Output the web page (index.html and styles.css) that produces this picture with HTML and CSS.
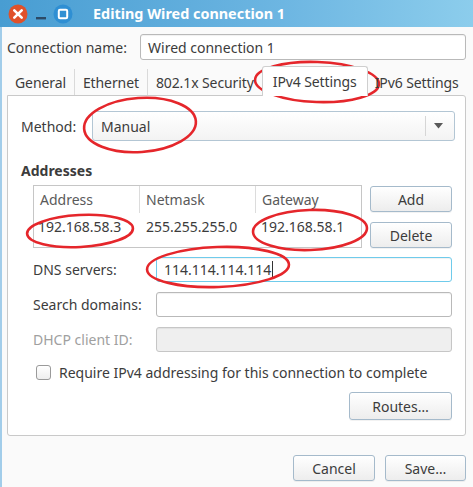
FILE: index.html
```html
<!DOCTYPE html>
<html>
<head>
<meta charset="utf-8">
<link rel="stylesheet" href="styles.css">
</head>
<body>
<div class="titlebar">
  <div class="wm">
    <svg class="wm-btn" width="20" height="20" viewBox="0 0 20 20">
      <circle cx="10" cy="10" r="9.5" fill="#e0512a"/>
      <path d="M6.3 6.3 L13.7 13.7 M13.7 6.3 L6.3 13.7" stroke="#fff" stroke-width="2.6" stroke-linecap="round"/>
    </svg>
    <svg class="wm-min" width="12" height="20" viewBox="0 0 12 20">
      <rect x="1" y="13" width="10" height="2.4" fill="#2c4a66"/>
    </svg>
    <svg class="wm-btn" width="20" height="20" viewBox="0 0 20 20">
      <circle cx="10" cy="10" r="9.5" fill="#2f8fd3"/>
      <rect x="5.8" y="5.8" width="8.4" height="8.4" rx="1.2" fill="none" stroke="#fff" stroke-width="2"/>
    </svg>
  </div>
  <div class="title">Editing Wired connection 1</div>
</div>

<div class="window">
  <div class="name-row">
    <span class="label name-label">Connection name:</span>
    <div class="entry name-entry">Wired connection 1</div>
  </div>

  <div class="tabs">
    <div class="tab sep">General</div>
    <div class="tab sep">Ethernet</div>
    <div class="tab before-active">802.1x Security</div>
    <div class="tab active">IPv4 Settings</div>
    <div class="tab after-active">IPv6 Settings</div>
  </div>

  <div class="panel">
    <div class="method-row">
      <span class="label method-label">Method:</span>
      <div class="combo">
        <span class="combo-text">Manual</span>
        <span class="combo-sep"></span>
        <svg class="combo-arrow" width="9" height="6" viewBox="0 0 9 6"><path d="M0 0 H9 L4.5 5.5 Z" fill="#5a5a5a"/></svg>
      </div>
    </div>

    <div class="heading">Addresses</div>

    <div class="addr-area">
      <div class="tree">
        <div class="tree-head">
          <div class="col c1">Address</div>
          <div class="col c2">Netmask</div>
          <div class="col c3">Gateway</div>
        </div>
        <div class="tree-row">
          <div class="cell c1">192.168.58.3</div>
          <div class="cell c2">255.255.255.0</div>
          <div class="cell c3">192.168.58.1</div>
        </div>
      </div>
      <div class="side-buttons">
        <div class="btn side-btn">Add</div>
        <div class="btn side-btn">Delete</div>
      </div>
    </div>

    <div class="form">
      <span class="label">DNS servers:</span>
      <div class="entry focus">114.114.114.114<span class="caret"></span></div>
      <span class="label">Search domains:</span>
      <div class="entry"></div>
      <span class="label disabled">DHCP client ID:</span>
      <div class="entry off"></div>
    </div>

    <div class="check-row">
      <span class="checkbox"></span>
      <span class="label">Require IPv4 addressing for this connection to complete</span>
    </div>

    <div class="routes-row">
      <div class="btn routes-btn">Routes…</div>
    </div>
  </div>

  <div class="actions">
    <div class="btn act-btn cancel">Cancel</div>
    <div class="btn act-btn save">Save…</div>
  </div>
</div>

<svg class="annotations" width="473" height="487" viewBox="0 0 473 487">
  <g fill="none" stroke="#e5262b" stroke-width="2.6">
    <ellipse cx="317" cy="82" rx="62" ry="20" transform="rotate(2 317 82)"/>
    <ellipse cx="140" cy="125" rx="56" ry="27" transform="rotate(-4 140 125)"/>
    <ellipse cx="80" cy="231" rx="53" ry="16" transform="rotate(-3 80 231)"/>
    <ellipse cx="310" cy="230" rx="57" ry="20" transform="rotate(-2 310 230)"/>
    <ellipse cx="218" cy="267" rx="71" ry="20" transform="rotate(-2 218 267)"/>
  </g>
</svg>
</body>
</html>
```

FILE: styles.css
```css
html, body {
  margin: 0;
  padding: 0;
}
body {
  width: 473px;
  height: 487px;
  overflow: hidden;
  position: relative;
  background: #fafafa;
  font-family: "Noto Sans", "Open Sans", sans-serif;
  font-size: 14px;
  color: #3c3c3c;
}

.titlebar {
  height: 27px;
  display: flex;
  align-items: center;
  background: linear-gradient(to right, #489dd2 0%, #6db6e2 60%, #8ccdec 100%);
}
.wm {
  display: flex;
  align-items: center;
  padding-left: 8px;
  width: 85px;
  box-sizing: border-box;
}
.wm-btn { display: block; }
.wm-min { display: block; margin: 0 6px 0 7px; }
.title {
  color: #fff;
  font-weight: bold;
  font-size: 14.4px;
  padding-left: 8px;
}

.window {
  height: 460px;
  box-sizing: border-box;
  border-left: 2px solid #a2cdea;
  padding: 7px 7px 0 5px;
  display: flex;
  flex-direction: column;
}

.label { white-space: nowrap; }
.label.disabled { color: #a0a0a0; }

.entry {
  box-sizing: border-box;
  border: 1px solid #b9b9b9;
  border-radius: 3px;
  background: #fff;
  box-shadow: inset 0 1px 1px rgba(0,0,0,0.06);
  display: flex;
  align-items: center;
  padding: 0 7px;
}
.entry.focus { border-color: #6fcbeb; }
.entry.off { background: #efefef; border-color: #c6c6c6; }
.caret {
  display: inline-block;
  width: 1px;
  height: 17px;
  background: #333;
  margin-left: 1px;
}

.name-row {
  display: flex;
  align-items: center;
  height: 26px;
}
.name-label { width: 133px; }
.name-entry { flex: 1; height: 26px; }

.tabs {
  display: flex;
  align-items: flex-end;
  height: 29px;
  margin-top: 6px;
  padding-left: 0;
  position: relative;
  z-index: 1;
  letter-spacing: -0.1px;
}
.tab {
  height: 26px;
  padding: 0 8px;
  display: flex;
  align-items: center;
  white-space: nowrap;
  box-sizing: border-box;
}
.tab.sep { border-right: 1px solid #dadada; }
.tab.before-active { padding-right: 8px; }
.tab.after-active { padding-left: 7px; }
.tab.active {
  height: 30px;
  padding: 0 10px 0 10px;
  background: #fff;
  border: 1px solid #cfcfcf;
  border-bottom: none;
  border-radius: 3px 3px 0 0;
  margin-bottom: -1px;
}

.panel {
  height: 341px;
  box-sizing: border-box;
  border: 1px solid #c9c9c9;
  border-radius: 0 3px 3px 3px;
  background: #fff;
  padding: 15px 10px 0 13px;
  display: flex;
  flex-direction: column;
}

.method-row {
  display: flex;
  align-items: center;
  height: 30px;
}
.method-label { width: 71px; }
.combo {
  flex: 1;
  height: 30px;
  box-sizing: border-box;
  border: 1px solid #b3c6d4;
  border-radius: 3px;
  background: linear-gradient(#ffffff, #f3f3f3);
  display: flex;
  align-items: center;
  padding-left: 8px;
}
.combo-text { flex: 1; }
.combo-sep {
  width: 1px;
  height: 20px;
  background: #d6d6d6;
}
.combo-arrow { margin: 0 11px 0 8px; }

.heading {
  font-weight: bold;
  margin-top: 21px;
  height: 18px;
  line-height: 18px;
}

.addr-area {
  display: flex;
  margin: 5px 3px 0 12px;
  gap: 8px;
}
.tree {
  width: 329px;
  height: 63px;
  box-sizing: border-box;
  border: 1px solid #c6c6c6;
  background: #fff;
}
.tree-head, .tree-row {
  display: grid;
  grid-template-columns: 106px 116px 1fr;
}
.tree-head { height: 27px; }
.col {
  display: flex;
  align-items: center;
  padding-left: 6px;
  color: #5a5a5a;
  border-right: 1px solid #dcdcdc;
}
.col.c3 { border-right: none; }
.tree-row { height: 27px; }
.cell {
  display: flex;
  align-items: center;
  padding-left: 4px;
}
.cell.c2 { padding-left: 6px; }
.cell.c3 { padding-left: 5px; }

.side-buttons {
  display: flex;
  flex-direction: column;
  gap: 10px;
  padding-top: 1px;
}

.btn {
  box-sizing: border-box;
  border: 1px solid #a5bacb;
  border-radius: 3px;
  background: linear-gradient(#ffffff, #ededed);
  box-shadow: 0 1px 0 rgba(0,0,0,0.05);
  display: flex;
  align-items: center;
  justify-content: center;
  white-space: nowrap;
}
.side-btn { width: 82px; height: 26px; }

.form {
  display: grid;
  grid-template-columns: 123px 296px;
  grid-auto-rows: 25px;
  row-gap: 10px;
  margin: 9px 0 0 12px;
  align-items: center;
}
.form .entry { height: 25px; }

.check-row {
  display: flex;
  align-items: center;
  height: 20px;
  margin: 10px 0 0 15px;
}
.checkbox {
  width: 15px;
  height: 15px;
  box-sizing: border-box;
  border: 1px solid #9a9a9a;
  border-radius: 3px;
  background: linear-gradient(#fff, #eee);
  margin-right: 8px;
}

.routes-row {
  display: flex;
  justify-content: flex-end;
  margin: 10px 3px 0 0;
}
.routes-btn { width: 103px; height: 28px; }

.actions {
  display: flex;
  justify-content: flex-end;
  gap: 10px;
  margin-top: 19px;
}
.act-btn { height: 26px; }
.cancel { width: 82px; }
.save { width: 81px; }

.annotations {
  position: absolute;
  left: 0;
  top: 0;
  pointer-events: none;
}
```
